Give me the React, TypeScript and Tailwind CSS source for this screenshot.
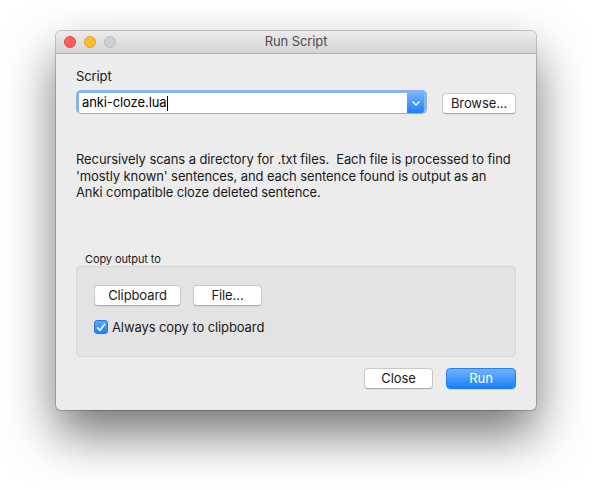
import React from 'react';

const font = { fontFamily: 'Inter, "Liberation Sans", Arial, sans-serif' };

function TrafficLights() {
  return (
    <div className="flex items-center gap-[8px] pl-[8px]">
      <span className="w-[12px] h-[12px] rounded-full bg-[#fc5f57] border border-[#df4744]" />
      <span className="w-[12px] h-[12px] rounded-full bg-[#fdbc2e] border border-[#dea236]" />
      <span className="w-[12px] h-[12px] rounded-full bg-[#d0d0d0] border border-[#bcbcbc]" />
    </div>
  );
}

function PushButton({ label, width, primary = false }: { label: string; width: string; primary?: boolean }) {
  if (primary) {
    return (
      <button
        className={`${width} h-[21px] rounded-[4px] border border-[#2a7df0] bg-gradient-to-b from-[#6cb3fa] to-[#0d7ffb] text-white text-[13px] leading-[19px] text-center shadow-[0_1px_0_rgba(0,0,0,0.08)]`}
      >
        {label}
      </button>
    );
  }
  return (
    <button
      className={`${width} h-[21px] rounded-[4px] border border-[#c8c8c8] border-b-[#acacac] bg-white text-[#1a1a1a] text-[13px] leading-[19px] text-center shadow-[0_1px_0_rgba(0,0,0,0.05)]`}
    >
      {label}
    </button>
  );
}

export default function App() {
  return (
    <div className="w-[592px] h-[490px] bg-white pt-[31px] pl-[56px] tracking-[-0.1px]" style={font}>
      <div className="w-[480px] h-[379px] rounded-[5px] bg-[#ececec] flex flex-col overflow-hidden shadow-[0_24px_50px_rgba(0,0,0,0.55),0_0_0_1px_rgba(0,0,0,0.2)]">
        {/* title bar */}
        <div className="relative h-[23px] shrink-0 flex items-center bg-gradient-to-b from-[#ebebeb] to-[#d5d5d5] border-b border-[#b4b4b4]">
          <TrafficLights />
          <div className="absolute inset-0 flex items-center justify-center text-[13px] text-[#4d4d4d]">
            Run Script
          </div>
        </div>

        {/* body */}
        <div className="flex-1 flex flex-col px-[20px] pt-[14px]">
          <div className="text-[13px] leading-[16px] text-[#1a1a1a]">Script</div>

          <div className="mt-[6px] flex items-center">
            <div className="w-[353px] h-[24px] rounded-[5px] bg-[#86b2ee] p-[3px] pb-[1px] flex">
              <div className="flex-1 flex items-center bg-white rounded-l-[1px] pl-[3px]">
                <span className="text-[13px] text-black">anki-cloze.lua</span>
                <span className="ml-[1px] w-[1px] h-[15px] bg-black" />
              </div>
              <div className="w-[17px] flex items-center justify-center rounded-r-[3px] bg-gradient-to-b from-[#6cb3fa] to-[#1a80fb]">
                <svg width="8" height="5" viewBox="0 0 8 5" fill="none">
                  <path d="M1 1l3 3 3-3" stroke="white" strokeWidth="1.4" strokeLinecap="round" strokeLinejoin="round" />
                </svg>
              </div>
            </div>
            <div className="ml-[15px]">
              <PushButton label="Browse..." width="w-[74px]" />
            </div>
          </div>

          <div className="mt-[37px] text-[13px] leading-[16.5px] text-[#1a1a1a] whitespace-pre">
            <div>Recursively scans a directory for .txt files.  Each file is processed to find</div>
            <div>'mostly known' sentences, and each sentence found is output as an</div>
            <div>Anki compatible cloze deleted sentence.</div>
          </div>

          <div className="mt-[51px] pl-[9px] text-[11px] leading-[14px] text-[#1a1a1a]">Copy output to</div>
          <div className="h-[91px] rounded-[4px] bg-[#e3e3e3] border border-[#d8d8d8] pl-[17px] pt-[18px] flex flex-col">
            <div className="flex gap-[12px]">
              <PushButton label="Clipboard" width="w-[87px]" />
              <PushButton label="File..." width="w-[69px]" />
            </div>
            <div className="mt-[12px] flex items-center gap-[4px]">
              <span className="w-[14px] h-[14px] rounded-[3px] bg-gradient-to-b from-[#5aa9fa] to-[#1a7ff9] border border-[#2a76de] flex items-center justify-center">
                <svg width="10" height="9" viewBox="0 0 10 9" fill="none">
                  <path d="M1.5 4.8l2.4 2.6L8.6 1.3" stroke="white" strokeWidth="1.6" strokeLinecap="round" strokeLinejoin="round" />
                </svg>
              </span>
              <span className="text-[13px] text-[#1a1a1a]">Always copy to clipboard</span>
            </div>
          </div>

          <div className="mt-[11px] flex justify-end gap-[13px]">
            <PushButton label="Close" width="w-[69px]" />
            <PushButton label="Run" width="w-[70px]" primary />
          </div>
        </div>
      </div>
    </div>
  );
}
